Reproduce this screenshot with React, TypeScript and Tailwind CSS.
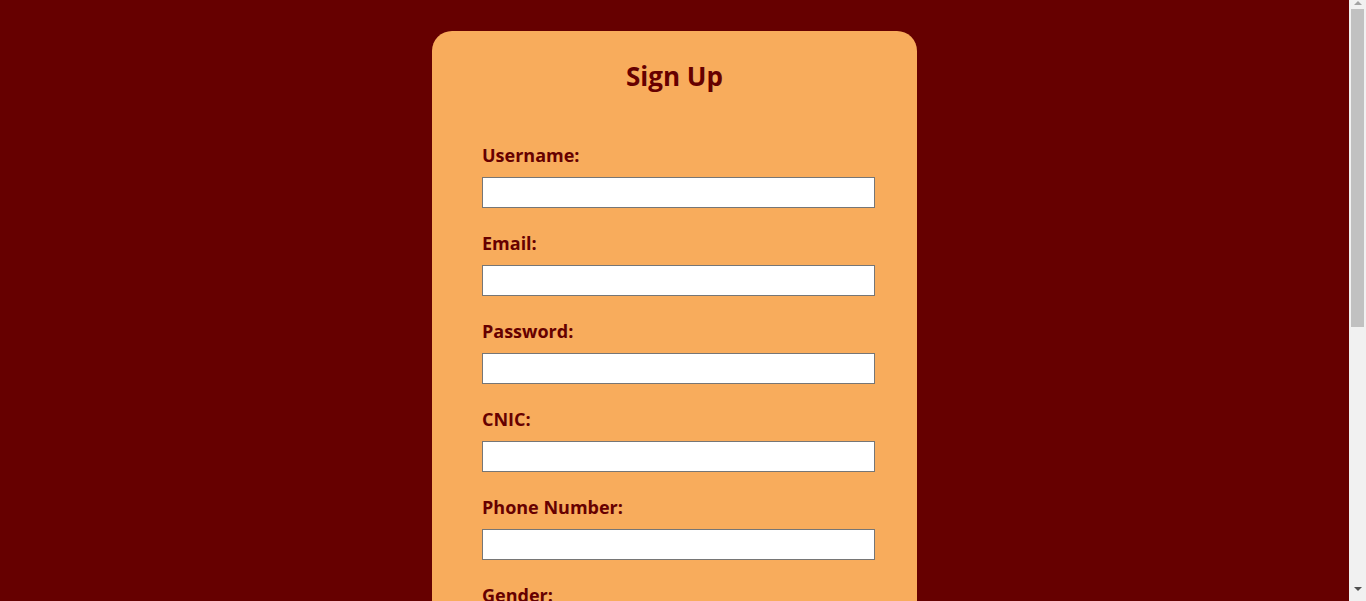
import React from "react";

const fields = [
  { label: "Username:", type: "text" },
  { label: "Email:", type: "email" },
  { label: "Password:", type: "password" },
  { label: "CNIC:", type: "text" },
  { label: "Phone Number:", type: "tel" },
];

export default function App() {
  return (
    <div
      className="min-h-screen bg-[#660000] pt-[31px] pb-[40px] pr-[17px] flex justify-center"
      style={{ fontFamily: '"Open Sans", "Noto Sans", sans-serif' }}
    >
      <div className="w-[485px] bg-[#f8ac5c] rounded-[20px] pt-[29px] pb-[40px] pl-[50px] pr-[42px] text-[#660000]">
        <h2 className="text-[26px] font-bold leading-[32px] text-center mr-[8px] mb-[50px]">
          Sign Up
        </h2>
        {fields.map((f) => (
          <div key={f.label} className="mb-[22px]">
            <label className="block text-[18px] font-bold leading-[27px] h-[27px] mb-[8px]">
              {f.label}
            </label>
            <input
              type={f.type}
              className="block w-[393px] h-[31px] bg-white border border-[#767676] px-1"
            />
          </div>
        ))}
        <div className="mb-[22px]">
          <label className="block text-[18px] font-bold leading-[27px] h-[27px] mb-[8px]">
            Gender:
          </label>
          <div className="flex gap-4 text-[16px]">
            <label className="flex items-center gap-1">
              <input type="radio" name="g" /> Male
            </label>
            <label className="flex items-center gap-1">
              <input type="radio" name="g" /> Female
            </label>
          </div>
        </div>
        <button className="w-[393px] h-[40px] bg-[#660000] text-white font-bold rounded">
          Sign Up
        </button>
      </div>
      <div className="fixed top-0 right-0 h-screen w-[17px] bg-[#f1f1f1] flex flex-col items-center">
        <div className="h-[9px] flex items-start justify-center pt-[1px]">
          <div className="w-0 h-0 border-l-[4px] border-r-[4px] border-b-[4px] border-l-transparent border-r-transparent border-b-[#a3a3a3]" />
        </div>
        <div className="w-[13px] h-[318px] bg-[#c1c1c1]" />
        <div className="flex-1" />
        <div className="h-[14px] flex items-start justify-center">
          <div className="w-0 h-0 border-l-[4px] border-r-[4px] border-t-[4px] border-l-transparent border-r-transparent border-t-[#505050]" />
        </div>
      </div>
    </div>
  );
}
